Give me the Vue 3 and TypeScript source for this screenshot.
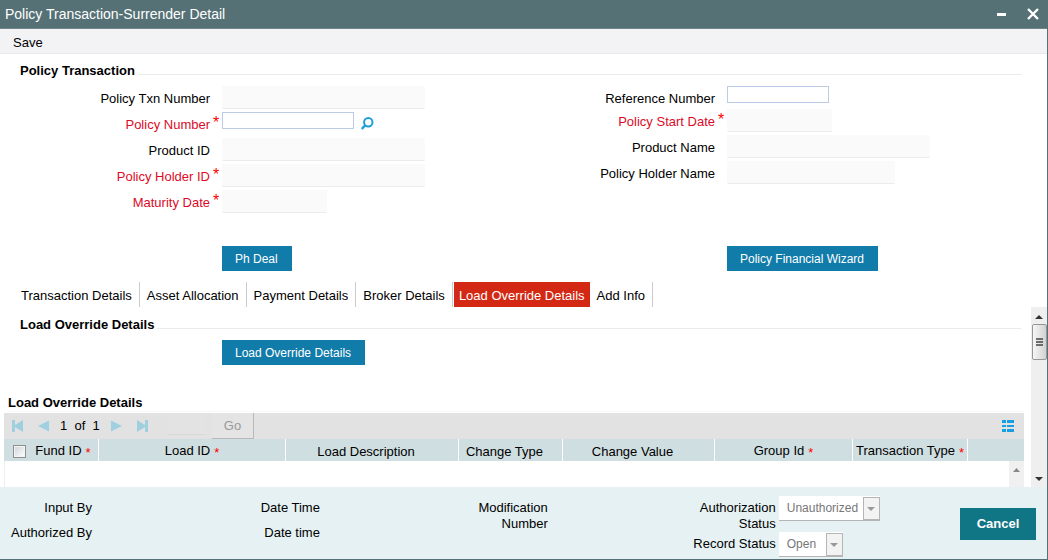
<script setup lang="ts">
import { ref } from 'vue'

interface Field {
  id: string
  label: string
  required?: boolean
  size: 'date' | 'ref' | 'lookup' | 'name' | 'full'
  editable?: boolean
}

const leftFields: Field[] = [
  { id: 'txn', label: 'Policy Txn Number', size: 'full' },
  { id: 'policy', label: 'Policy Number', required: true, size: 'lookup', editable: true },
  { id: 'product', label: 'Product ID', size: 'full' },
  { id: 'holder', label: 'Policy Holder ID', required: true, size: 'full' },
  { id: 'maturity', label: 'Maturity Date', required: true, size: 'date' },
]
const rightFields: Field[] = [
  { id: 'reference', label: 'Reference Number', size: 'ref', editable: true },
  { id: 'start', label: 'Policy Start Date', required: true, size: 'date' },
  { id: 'pname', label: 'Product Name', size: 'full' },
  { id: 'hname', label: 'Policy Holder Name', size: 'name' },
]
const columns = [leftFields, rightFields]

const tabs = [
  'Transaction Details',
  'Asset Allocation',
  'Payment Details',
  'Broker Details',
  'Load Override Details',
  'Add Info',
]
const activeTab = ref('Load Override Details')

const headers = [
  { key: 'fund', label: 'Fund ID', required: true },
  { key: 'load', label: 'Load ID', required: true },
  { key: 'desc', label: 'Load Description', required: false },
  { key: 'ctype', label: 'Change Type', required: false },
  { key: 'cvalue', label: 'Change Value', required: false },
  { key: 'group', label: 'Group Id', required: true },
  { key: 'ttype', label: 'Transaction Type', required: true },
]
</script>

<template>
  <div class="window">
    <header class="titlebar">
      <h1>Policy Transaction-Surrender Detail</h1>
      <button class="winbtn" aria-label="Minimize">
        <svg width="11" height="12" viewBox="0 0 11 12"><path d="M1 6.5h9" stroke="#fff" stroke-width="3" /></svg>
      </button>
      <button class="winbtn" aria-label="Close">
        <svg width="12" height="12" viewBox="0 0 12 12"><path d="M1 1l10 10M11 1L1 11" stroke="#fff" stroke-width="2.4" /></svg>
      </button>
    </header>

    <nav class="menu"><button class="plain">Save</button></nav>

    <section class="form">
      <h2 class="legend">Policy Transaction</h2>
      <div class="columns">
        <div v-for="(fields, i) in columns" :key="i" class="column">
          <div v-for="f in fields" :key="f.id" class="row" :class="{ short: f.size === 'ref' }">
            <label :for="f.id" :class="{ required: f.required }">{{ f.label }}</label>
            <span class="mark">{{ f.required ? '*' : '' }}</span>
            <input :id="f.id" type="text" :class="[f.size, { editable: f.editable }]" :readonly="!f.editable" />
            <button v-if="f.size === 'lookup'" class="plain lens" aria-label="Find policy">
              <svg width="13" height="13" viewBox="0 0 13 13" fill="none" stroke="#1a9fdc" stroke-width="2">
                <circle cx="7.3" cy="5.2" r="4.2" /><path d="M4.300 8.300L0.800 12" stroke-width="2.4" />
              </svg>
            </button>
          </div>
        </div>
      </div>
      <div class="columns actions">
        <div class="indent"><button class="blue">Ph Deal</button></div>
        <div class="indent"><button class="blue">Policy Financial Wizard</button></div>
      </div>
    </section>

    <nav class="tabs">
      <button v-for="t in tabs" :key="t" class="tab" :class="{ active: t === activeTab }" @click="activeTab = t">{{ t }}</button>
    </nav>

    <div class="panel">
      <main class="content">
        <h2 class="legend">Load Override Details</h2>
        <div class="indent single"><button class="blue">Load Override Details</button></div>
        <h3>Load Override Details</h3>
        <div class="grid">
          <div class="pager">
            <button class="plain icon" aria-label="First">
              <svg width="12" height="12" viewBox="0 0 12 12" fill="#a0cfdf"><path d="M0 0h3v5L11 0v12L3 7v5H0z" /></svg>
            </button>
            <button class="plain icon" aria-label="Previous">
              <svg width="12" height="12" viewBox="0 0 12 12" fill="#a0cfdf"><path d="M11 0.500v11L0 6z" /></svg>
            </button>
            <span class="count">1&nbsp; of&nbsp; 1</span>
            <button class="plain icon" aria-label="Next">
              <svg width="12" height="12" viewBox="0 0 12 12" fill="#a0cfdf"><path d="M1 0.500v11L12 6z" /></svg>
            </button>
            <button class="plain icon" aria-label="Last">
              <svg width="12" height="12" viewBox="0 0 12 12" fill="#a0cfdf"><path d="M12 0H9v5L1 0v12l8-5v5h3z" /></svg>
            </button>
            <input class="pageno" type="text" aria-label="Page" disabled />
            <button class="go" disabled>Go</button>
            <button class="plain icon view" aria-label="Single record view">
              <svg width="14" height="12" viewBox="0 0 14 12" fill="#169fe4">
                <path d="M1 0h4v3H1zM6 0h7v3H6zM1 5h4v2H1zM6 5h7v2H6zM1 9h4v3H1zM6 9h7v3H6z" />
              </svg>
            </button>
          </div>
          <table>
            <colgroup>
              <col class="c-check" />
              <col v-for="h in headers" :key="h.key" :class="'c-' + h.key" />
              <col />
            </colgroup>
            <thead>
              <tr>
                <th class="check"><input type="checkbox" aria-label="Select all" /></th>
                <th v-for="h in headers" :key="h.key" scope="col" :class="{ optional: !h.required }">{{ h.label }}<span v-if="h.required" class="star">*</span></th>
                <th></th>
              </tr>
            </thead>
          </table>
          <div class="rows">
            <div class="gridscroll">
              <svg width="7" height="4" viewBox="0 0 7 4"><path d="M0 4L3.500 0L7 4z" fill="#888" /></svg>
            </div>
          </div>
        </div>
      </main>
      <div class="scrollbar">
        <svg width="8" height="4" viewBox="0 0 8 4"><path d="M0 4L4 0L8 4z" fill="#333" /></svg>
        <div class="thumb">
          <svg width="7" height="9" viewBox="0 0 7 9"><path d="M0 1h7M0 4h7M0 7h7" stroke="#444" stroke-width="1.500" /></svg>
        </div>
        <svg class="down" width="8" height="4" viewBox="0 0 8 4"><path d="M0 0L4 4L8 0z" fill="#333" /></svg>
      </div>
    </div>

    <footer>
      <div class="audit"><span>Input By</span><span>Authorized By</span></div>
      <div class="audit"><span>Date Time</span><span>Date time</span></div>
      <div class="audit"><span>Modification Number</span></div>
      <div class="status">
        <label for="auth">Authorization Status</label>
        <div class="drop wide">
          <select id="auth" disabled><option>Unauthorized</option></select>
          <span class="arrow"></span>
        </div>
        <label for="record">Record Status</label>
        <div class="drop">
          <select id="record" disabled><option>Open</option></select>
          <span class="arrow"></span>
        </div>
      </div>
      <button class="cancel">Cancel</button>
    </footer>
  </div>
</template>

<style>
html,
body {
  margin: 0;
  background: #fff;
}
</style>

<style scoped>
* {
  box-sizing: border-box;
}
.window {
  min-height: 100vh;
  display: flex;
  flex-direction: column;
  font: 13px/16px "Liberation Sans", Arial, sans-serif;
  color: #000;
  border-right: 1px solid #557175;
  border-bottom: 1px solid #557175;
}
button,
input,
select {
  font: inherit;
  margin: 0;
  padding: 0;
  border-radius: 0;
}
button {
  border: 0;
  white-space: nowrap;
}
svg {
  display: block;
}
.plain,
.winbtn {
  background: none;
  color: inherit;
}
.titlebar {
  display: flex;
  align-items: center;
  height: 29px;
  padding: 0 8px 0 5px;
  background: #557175;
  border-bottom: 1px solid #6f8588;
}
h1 {
  flex: 1;
  margin: 0;
  padding-top: 1px;
  font-size: 14px;
  font-weight: 400;
  line-height: 29px;
  color: #fff;
}
.winbtn {
  margin-left: 20px;
}
.menu {
  height: 25px;
  padding: 6px 13px 0;
  background: #f3f3f6;
  border-bottom: 1px solid #e9e9eb;
}
.menu button {
  display: block;
}
.form {
  padding-top: 9px;
}
.legend {
  display: flex;
  align-items: flex-end;
  gap: 3px;
  margin: 0 26px 0 20px;
  font-size: 13px;
  line-height: 16px;
}
.legend::after {
  content: "";
  flex: 1;
  height: 1px;
  margin-bottom: 4px;
  background: #eaeaea;
}
.columns {
  display: grid;
  grid-template-columns: 505fr 542fr;
}
.form .columns:not(.actions) {
  padding-top: 7px;
}
.row {
  display: flex;
  min-height: 26px;
}
.row.short {
  min-height: 23px;
}
.row label {
  width: 210px;
  padding-top: 5px;
  text-align: right;
}
.row label.required {
  color: #dc0a28;
}
.mark {
  width: 12px;
  padding: 3px 0 0 3px;
  font-size: 16px;
  color: #f00;
}
.row input {
  height: 23px;
  border: 1px solid #fafafa;
  border-bottom-color: #ececec;
  background: #fafafa;
}
.row input.editable {
  height: 17px;
  background: #fff;
  border: 1px solid #bccbe6;
}
.date {
  width: 105px;
}
.ref {
  width: 102px;
}
.lookup {
  width: 132px;
}
.name {
  width: 168px;
}
.full {
  width: 203px;
}
.lens {
  height: 13px;
  margin: 5px 0 0 7px;
}
.indent {
  padding-left: 222px;
}
.actions {
  padding-top: 30px;
}
.blue {
  display: block;
  height: 25px;
  padding: 0 14px 0 13px;
  background: #117ba9;
  color: #fff;
  font-size: 12px;
}
.tabs {
  display: flex;
  height: 25px;
  margin: 11px 0 0 14px;
}
.tab {
  padding: 3px 7px 0;
  background: none;
  color: #000;
  border-right: 1px solid #ccc;
}
.tab.active {
  margin-left: 1px;
  padding: 3px 5px 0;
  border: 0;
  background: #d22814;
  color: #fff;
}
.panel {
  flex: 1;
  display: flex;
}
.content {
  flex: 1;
  display: flex;
  flex-direction: column;
  padding-top: 10px;
}
.content .legend {
  margin-right: 10px;
}
.single {
  padding-top: 7px;
}
h3 {
  margin: 30px 7px 0 8px;
  font-size: 13px;
  line-height: 16px;
  border-bottom: 1px solid #f7f7f7;
}
.grid {
  flex: 1;
  display: flex;
  flex-direction: column;
  margin: 1px 7px 0 4px;
}
.pager {
  display: flex;
  align-items: center;
  height: 26px;
  padding: 0 9px 0 8px;
  background: #e2e2e2;
}
.pager .icon {
  margin-right: 14px;
}
.pager .count {
  width: 36px;
  margin: 0 14px 0 -4px;
  white-space: nowrap;
}
.pager .icon.view {
  margin: 0 0 0 auto;
}
.pageno {
  width: 38px;
  height: 18px;
  margin-left: 6px;
  border: 0;
  border-bottom: 1px solid #d9d9d9;
  background: #e3e3e3;
}
.go {
  width: 42px;
  height: 26px;
  margin-left: 6px;
  background: #e4e4e4;
  border-right: 1px solid #b9b9b9;
  border-bottom: 1px solid #b9b9b9;
  color: #999;
}
table {
  width: 100%;
  table-layout: fixed;
  border-collapse: separate;
  border-spacing: 0;
}
th {
  height: 21px;
  padding: 2px 0 0;
  background: #cfdee1;
  border-right: 1px solid #fff;
  font-weight: 400;
  line-height: 19px;
  white-space: nowrap;
}
th.optional {
  padding-right: 12px;
}
th:last-child {
  border-right: 0;
}
th.check {
  border-right-color: #cfdee1;
}
.check input {
  appearance: none;
  display: block;
  width: 13px;
  height: 13px;
  margin-left: 9px;
  border: 1px solid #8e8f8f;
  background: linear-gradient(135deg, #cfd3d6, #fff);
  box-shadow: inset 0 0 0 1px #f4f4f4;
}
.star {
  margin-left: 4px;
  color: #f00;
  line-height: 16px;
  vertical-align: -2px;
}
.c-check {
  width: 24px;
}
.c-fund {
  width: 71px;
}
.c-load {
  width: 187px;
}
.c-desc {
  width: 173px;
}
.c-ctype {
  width: 104px;
}
.c-cvalue {
  width: 152px;
}
.c-group {
  width: 138px;
}
.c-ttype {
  width: 115px;
}
.rows {
  flex: 1;
  display: flex;
  justify-content: flex-end;
  min-height: 24px;
  border-left: 1px solid #eee;
}
.gridscroll {
  display: flex;
  justify-content: center;
  width: 15px;
  padding-top: 7px;
  background: #f0f0f0;
}
.scrollbar {
  display: flex;
  flex-direction: column;
  align-items: center;
  width: 16px;
  padding: 8px 0 6px;
  background: #efefef;
}
.thumb {
  display: grid;
  place-items: center;
  width: 15px;
  height: 36px;
  margin-top: 5px;
  border: 1px solid #979797;
  border-radius: 2px;
  background: linear-gradient(90deg, #f6f6f6, #d2d2d2);
}
.down {
  margin-top: auto;
}
footer {
  display: flex;
  height: 72px;
  padding-right: 11px;
  background: #e5f1f3;
}
.audit {
  width: 22%;
  padding-top: 13px;
}
.audit span {
  display: block;
  width: 92px;
  margin-bottom: 9px;
  text-align: right;
}
.status {
  flex: 1;
  display: grid;
  grid-template-columns: 92px 1fr;
  column-gap: 3px;
  align-content: start;
  padding-top: 9px;
}
.status label {
  padding-top: 4px;
  text-align: right;
}
.drop {
  display: flex;
  width: 64px;
  height: 25px;
  background: #fff;
  border-bottom: 1px solid #b5b5b5;
}
.drop.wide {
  width: 101px;
}
.drop select {
  flex: 1;
  min-width: 0;
  appearance: none;
  padding-left: 8px;
  border: 0;
  background: none;
  color: #777;
  font-size: 12px;
  opacity: 1;
}
.arrow {
  display: grid;
  place-items: center;
  width: 17px;
  height: 23px;
  margin-top: 1px;
  border: 1px solid #b5b5b5;
  background: #f3f3f3;
  pointer-events: none;
}
.arrow::after {
  content: "";
  border: 4px solid transparent;
  border-top: 4px solid #999;
  border-bottom: 0;
}
.cancel {
  width: 76px;
  height: 32px;
  margin-top: 21px;
  background: #107585;
  color: #fff;
  font-weight: 700;
}
</style>
